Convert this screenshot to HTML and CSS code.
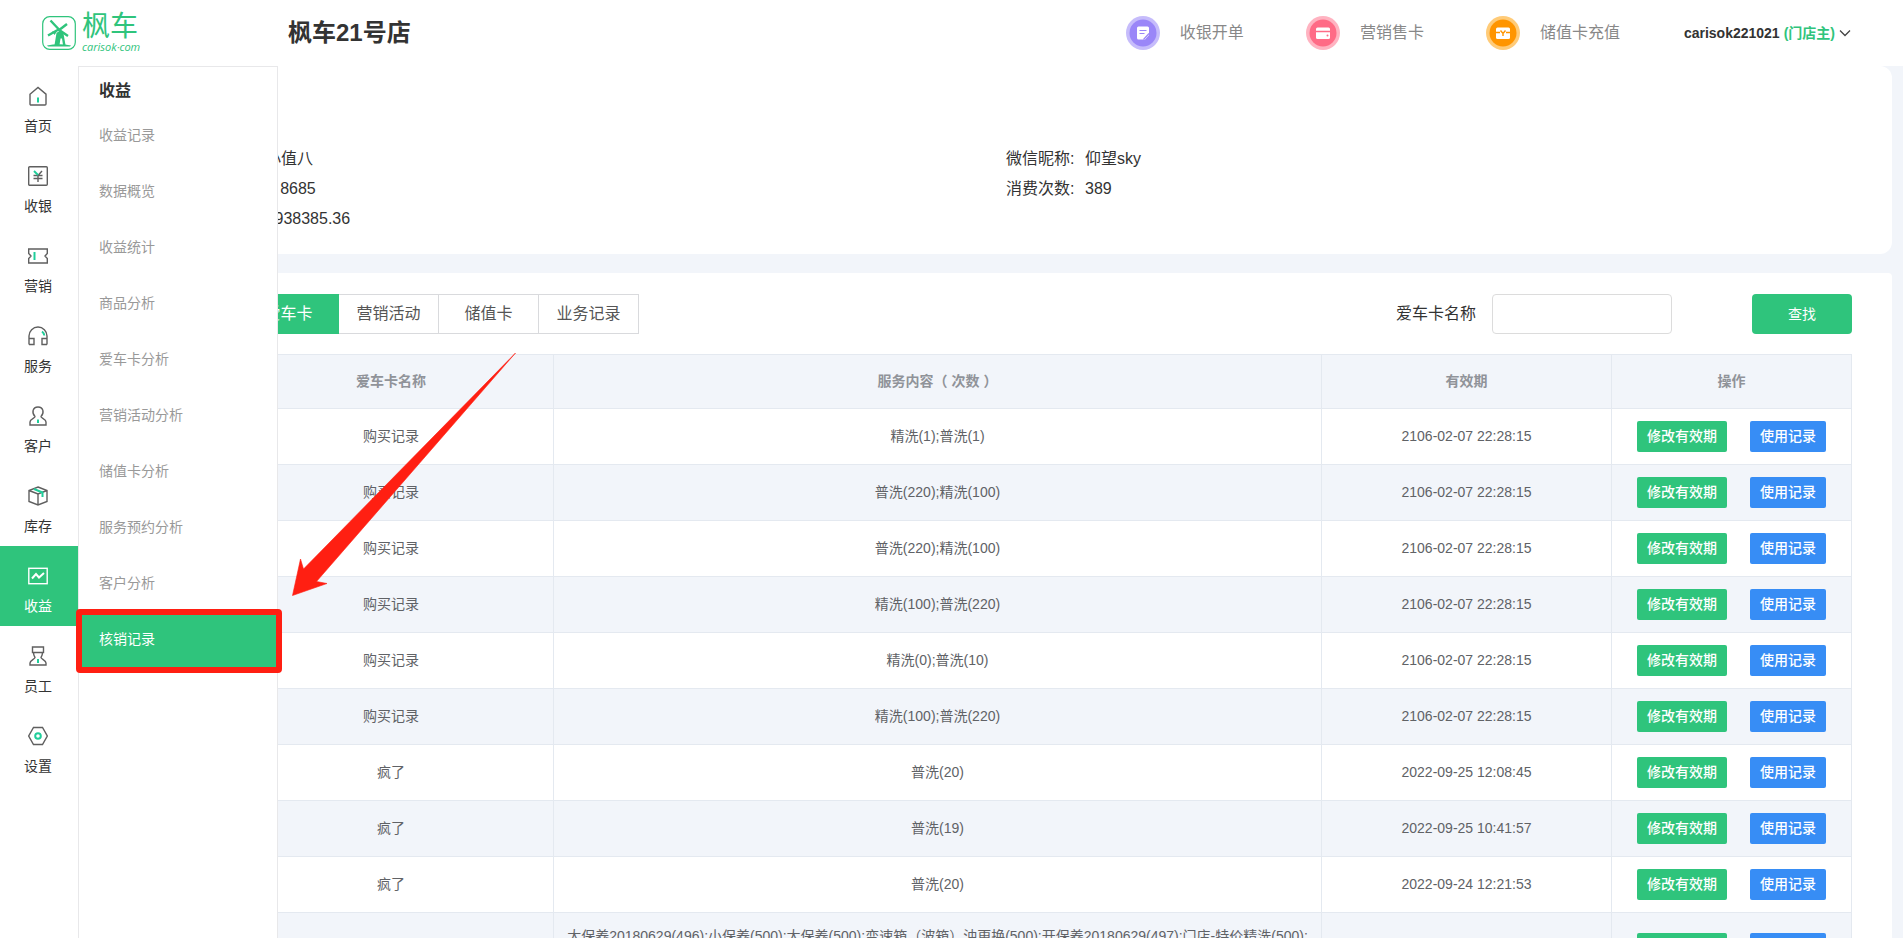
FILE: index.html
```html
<!DOCTYPE html>
<html lang="zh-CN">
<head>
<meta charset="utf-8">
<title>枫车21号店</title>
<link rel="stylesheet" href="styles.css">
</head>
<body>
<header class="topbar">
  <a class="logo" href="#">
    <svg class="logo-mark" viewBox="0 0 34 34" aria-hidden="true">
      <rect x="0.7" y="0.7" width="32.6" height="32.6" rx="7" fill="none" stroke="#2fc47c" stroke-width="1.2"/>
      <path d="M5 29.500Q17 27 29 29.500L28 30.500H6z" fill="#2fc47c"/>
      <path d="M14.500 17 18 14.500 21.500 17.500 23.500 29H21L20 22.500H18.500L17.500 29H12.500z" fill="#2fc47c"/>
      <path d="M8.500 4.500 16.500 13M25 8 16.500 14.500M6 19.500 16.500 13.500M26 20 16.500 13.500" fill="none" stroke="#2fc47c" stroke-width="2.400"/>
      <path d="M10 15.500h5l-2.500 3.500z" fill="#2fc47c"/>
    </svg>
    <span class="logo-text"><span class="logo-name">枫车</span><span class="logo-domain">carisok·com</span></span>
  </a>
  <h1 class="store">枫车21号店</h1>
  <nav class="quick">
    <a class="quick-link" href="#">
      <svg class="quick-icon" viewBox="0 0 34 34" aria-hidden="true"><circle cx="17" cy="17" r="17" fill="#c6bcfb"/><circle cx="17" cy="17" r="13.500" fill="#9a86f8"/><path d="M12.500 10.500h9a1.500 1.500 0 0 1 1.500 1.500v7l-4 4.500h-6.500a1.500 1.500 0 0 1-1.500-1.500V12a1.500 1.500 0 0 1 1.500-1.500z" fill="#fff"/><path d="M13.500 14.500h7M13.500 17.500h5M17.500 23.500l5.500-6" stroke="#9a86f8" stroke-width="1.200"/></svg>
      收银开单</a>
    <a class="quick-link" href="#">
      <svg class="quick-icon" viewBox="0 0 34 34" aria-hidden="true"><circle cx="17" cy="17" r="17" fill="#ffb3c1"/><circle cx="17" cy="17" r="13.500" fill="#ff6b86"/><rect x="10" y="11.500" width="14" height="11.500" rx="1.500" fill="#fff"/><path d="M10 15.500h14" stroke="#ff6b86" stroke-width="1.500"/><circle cx="21.500" cy="19.500" r="1" fill="#ff6b86"/></svg>
      营销售卡</a>
    <a class="quick-link" href="#">
      <svg class="quick-icon" viewBox="0 0 34 34" aria-hidden="true"><circle cx="17" cy="17" r="17" fill="#ffcb78"/><circle cx="17" cy="17" r="13.500" fill="#ff9500"/><rect x="10" y="11.500" width="14" height="11.500" rx="1.500" fill="#fff"/><path d="M10 16.500h4M20 16.500h4M14.500 14.500l2.500 3 2.500-3M17 17v3" fill="none" stroke="#ff9500" stroke-width="1.400"/></svg>
      储值卡充值</a>
  </nav>
  <button class="account" type="button">carisok221021 <span class="role">(门店主)</span>
    <svg class="chevron" viewBox="0 0 12 12" aria-hidden="true"><path d="M1 3.500l5 5 5-5" fill="none" stroke="#444" stroke-width="1.300"/></svg>
  </button>
</header>

<div class="shell">
  <nav class="sidebar">
    <a class="side-link" href="#"><svg class="side-icon" viewBox="0 0 20 20"><path class="ink" d="M2 8.200 10 1.500l8 6.700V18a1 1 0 0 1-1 1H3a1 1 0 0 1-1-1z"/><path class="accent" d="M10 11.500v5"/></svg>首页</a>
    <a class="side-link" href="#"><svg class="side-icon" viewBox="0 0 20 20"><rect class="ink" x="0.700" y="0.700" width="18.600" height="18.600" rx="1"/><path class="ink" d="M14 5l-4 4.500M5.500 9.500h9M5.500 12.500h9M10 9.500V16"/><path class="accent" d="M6 5l4 4"/></svg>收银</a>
    <a class="side-link" href="#"><svg class="side-icon" viewBox="0 0 20 20"><path class="ink" d="M.7 3h18.600v4.500L17 10l2.300 2.500V17H.7v-4.500L3 10 .7 7.500z"/><path class="accent" d="M6.500 6v8"/></svg>营销</a>
    <a class="side-link" href="#"><svg class="side-icon" viewBox="0 0 20 20"><path class="ink" d="M1 18.500V10a9 9 0 0 1 18 0v8.500M1 12.500h5v6H1M19 12.500h-5v6h5"/><path class="accent" d="M14 5.500q2 1.500 2.300 4"/></svg>服务</a>
    <a class="side-link" href="#"><svg class="side-icon" viewBox="0 0 20 20"><path class="ink" d="M7 10.500C3.500 7 4.500 1 10 1s6.500 6 3 9.500c-.5 1.500 5 2.500 5 5.500v3H2v-3c0-3 5.500-4 5-5.500z"/><path class="accent" d="M10 13.500v3.500"/></svg>客户</a>
    <a class="side-link" href="#"><svg class="side-icon" viewBox="0 0 20 20"><path class="ink" d="M10 1l9 3.500v11L10 19l-9-3.500v-11zM1 4.500 10 8l9-3.500M10 8v11"/><path class="accent" d="M6 3l8.500 3.500V11"/></svg>库存</a>
    <a class="side-link current" href="#"><svg class="side-icon" viewBox="0 0 20 20"><rect class="ink" x="0.800" y="2.300" width="18.400" height="15.400"/><path class="ink bold" d="M4 12.500 8 8l3 3.500L16 7"/></svg>收益</a>
    <a class="side-link" href="#"><svg class="side-icon" viewBox="0 0 20 20"><path class="ink" d="M4.500 1h11v5.500h-11zM5.500 6.500c0 2.500.5 3.500 1.500 5 0 1.500-5 2.500-5 5.500v2h16v-2c0-3-5-4-5-5.500 1-1.500 1.500-2.500 1.500-5"/><path class="accent" d="M10 13v4"/></svg>员工</a>
    <a class="side-link" href="#"><svg class="side-icon" viewBox="0 0 20 20"><path class="ink" d="M5.500 1.500h9l4.800 8.500-4.800 8.500h-9L.7 10z"/><circle class="accent" cx="10" cy="10" r="2.800"/></svg>设置</a>
  </nav>

  <nav class="submenu" aria-label="收益">
    <h2 class="submenu-title">收益</h2>
    <a class="sub-link" href="#">收益记录</a>
    <a class="sub-link" href="#">数据概览</a>
    <a class="sub-link" href="#">收益统计</a>
    <a class="sub-link" href="#">商品分析</a>
    <a class="sub-link" href="#">爱车卡分析</a>
    <a class="sub-link" href="#">营销活动分析</a>
    <a class="sub-link" href="#">储值卡分析</a>
    <a class="sub-link" href="#">服务预约分析</a>
    <a class="sub-link" href="#">客户分析</a>
    <a class="sub-link current" href="#">核销记录</a>
  </nav>

  <svg class="pointer" viewBox="0 0 224 243" aria-hidden="true"><path d="M223.500 0 11.500 216 8.500 206 .5 242.500 35 230.500 24.500 228.500z" fill="#ff1f12" stroke="#ff1f12" stroke-width="0.600"/></svg>

  <main class="content">
    <section class="card info">
      <dl class="facts">
        <div class="fact"><dt>客户姓名:</dt><dd>小小值八</dd></div>
        <div class="fact"><dt>手机号码:</dt><dd>138 8685</dd></div>
        <div class="fact"><dt>累计消费:</dt><dd>119938385.36</dd></div>
      </dl>
      <dl class="facts">
        <div class="fact"><dt>微信昵称:</dt><dd>仰望sky</dd></div>
        <div class="fact"><dt>消费次数:</dt><dd>389</dd></div>
      </dl>
    </section>

    <section class="card records">
      <div class="toolbar">
        <div class="tabs" role="tablist">
          <button class="tab" type="button" role="tab">车辆</button>
          <button class="tab current" type="button" role="tab" aria-selected="true">爱车卡</button>
          <button class="tab" type="button" role="tab">营销活动</button>
          <button class="tab" type="button" role="tab">储值卡</button>
          <button class="tab" type="button" role="tab">业务记录</button>
        </div>
        <form class="search">
          <label for="card-name">爱车卡名称</label>
          <input id="card-name" class="search-input" type="text">
          <button class="search-button" type="button">查找</button>
        </form>
      </div>
      <table class="table">
        <colgroup><col class="col-index"><col class="col-name"><col><col class="col-date"><col class="col-actions"></colgroup>
        <thead><tr><th>序号</th><th>爱车卡名称</th><th>服务内容（ 次数 ）</th><th>有效期</th><th>操作</th></tr></thead>
        <tbody>
          <tr><td>1</td><td>购买记录</td><td>精洗(1);普洗(1)</td><td>2106-02-07 22:28:15</td><td><div class="actions"><button class="btn edit" type="button">修改有效期</button><button class="btn usage" type="button">使用记录</button></div></td></tr>
          <tr><td>2</td><td>购买记录</td><td>普洗(220);精洗(100)</td><td>2106-02-07 22:28:15</td><td><div class="actions"><button class="btn edit" type="button">修改有效期</button><button class="btn usage" type="button">使用记录</button></div></td></tr>
          <tr><td>3</td><td>购买记录</td><td>普洗(220);精洗(100)</td><td>2106-02-07 22:28:15</td><td><div class="actions"><button class="btn edit" type="button">修改有效期</button><button class="btn usage" type="button">使用记录</button></div></td></tr>
          <tr><td>4</td><td>购买记录</td><td>精洗(100);普洗(220)</td><td>2106-02-07 22:28:15</td><td><div class="actions"><button class="btn edit" type="button">修改有效期</button><button class="btn usage" type="button">使用记录</button></div></td></tr>
          <tr><td>5</td><td>购买记录</td><td>精洗(0);普洗(10)</td><td>2106-02-07 22:28:15</td><td><div class="actions"><button class="btn edit" type="button">修改有效期</button><button class="btn usage" type="button">使用记录</button></div></td></tr>
          <tr><td>6</td><td>购买记录</td><td>精洗(100);普洗(220)</td><td>2106-02-07 22:28:15</td><td><div class="actions"><button class="btn edit" type="button">修改有效期</button><button class="btn usage" type="button">使用记录</button></div></td></tr>
          <tr><td>7</td><td>疯了</td><td>普洗(20)</td><td>2022-09-25 12:08:45</td><td><div class="actions"><button class="btn edit" type="button">修改有效期</button><button class="btn usage" type="button">使用记录</button></div></td></tr>
          <tr><td>8</td><td>疯了</td><td>普洗(19)</td><td>2022-09-25 10:41:57</td><td><div class="actions"><button class="btn edit" type="button">修改有效期</button><button class="btn usage" type="button">使用记录</button></div></td></tr>
          <tr><td>9</td><td>疯了</td><td>普洗(20)</td><td>2022-09-24 12:21:53</td><td><div class="actions"><button class="btn edit" type="button">修改有效期</button><button class="btn usage" type="button">使用记录</button></div></td></tr>
          <tr><td>10</td><td>疯了</td><td>大保养20180629(496);小保养(500);大保养(500);变速箱（波箱）油更换(500);开保养20180629(497);门店-特价精洗(500);普洗(500)</td><td>2022-09-24 12:21:53</td><td><div class="actions"><button class="btn edit" type="button">修改有效期</button><button class="btn usage" type="button">使用记录</button></div></td></tr>
        </tbody>
      </table>
    </section>
  </main>
</div>
</body>
</html>
```

FILE: styles.css
```css
* { box-sizing: border-box; }

body {
  margin: 0;
  height: 100vh;
  overflow: hidden;
  display: flex;
  flex-direction: column;
  background: #f2f5fa;
  color: #333;
  font: 14px/20px "Liberation Sans", "Noto Sans CJK SC", sans-serif;
}

a { color: inherit; text-decoration: none; }
button, input { font: inherit; color: inherit; }
button { border: 0; padding: 0; background: none; cursor: pointer; }
h1, h2, dl, dd { margin: 0; }

/* Top bar */
.topbar {
  flex: none;
  display: flex;
  align-items: center;
  height: 66px;
  padding: 0 52px 0 42px;
  background: #fff;
}
.logo { display: flex; align-items: center; gap: 6px; width: 246px; color: #2fc47c; }
.logo-mark { width: 34px; height: 34px; }
.logo-text { display: flex; flex-direction: column; }
.logo-name { font-size: 28px; line-height: 28px; }
.logo-domain { font: italic 11px/12px "Open Sans", sans-serif; }
.store { font-size: 24px; line-height: 32px; }
.quick { display: flex; margin-left: auto; }
.quick-link { display: flex; align-items: center; gap: 20px; margin-right: 62px; color: #888; font-size: 16px; }
.quick-link:last-child { margin-right: 64px; }
.quick-icon { width: 34px; height: 34px; }
.account { display: flex; align-items: center; gap: 4px; font-weight: bold; }
.role { color: #2fc47c; }
.chevron { width: 12px; height: 12px; }

/* Navigation */
.shell { position: relative; flex: 1; min-height: 0; display: flex; }
.sidebar { flex: none; width: 78px; background: #fff; }
.side-link {
  display: flex;
  flex-direction: column;
  align-items: center;
  gap: 10px;
  height: 80px;
  padding: 20px 2px 10px 0;
}
.side-icon { width: 20px; height: 20px; }
.ink { fill: none; stroke: #5f5f5f; stroke-width: 1.4; }
.ink.bold { stroke-width: 2; }
.accent { fill: none; stroke: #1fce9a; stroke-width: 2; }
.side-link.current { background: #2fc47c; color: #fff; }
.side-link.current .ink { stroke: #fff; }

.submenu {
  position: absolute;
  z-index: 2;
  top: 0;
  bottom: 0;
  left: 78px;
  width: 200px;
  border: 1px solid #e8e8ea;
  border-bottom: 0;
  background: #fff;
}
.submenu-title { padding: 12px 20px 4px; font-size: 16px; line-height: 24px; font-weight: bold; }
.sub-link { display: block; position: relative; padding: 18px 20px; color: #999; }
.sub-link.current { background: #2fc47c; color: #fff; }
.sub-link.current::after {
  content: "";
  position: absolute;
  inset: -2px -5px -6px -3px;
  border: 6px solid #ff1f12;
  border-radius: 4px;
}
.pointer { position: absolute; z-index: 3; top: 287px; left: 292px; width: 224px; height: 243px; overflow: visible; }

/* Content */
.content {
  flex: 1;
  min-width: 0;
  display: flex;
  flex-direction: column;
  gap: 19px;
  padding: 0 11px 0 10px;
  overflow: auto;
  scrollbar-width: none;
}
.card { flex: none; border-radius: 12px; background: #fff; }
.info {
  display: grid;
  grid-template-columns: 1fr 1fr;
  padding: 78px 50px 20px 82px;
  font-size: 16px;
  line-height: 30px;
}
.fact { display: flex; }
.fact dt { width: 79px; }
.records { padding: 21px 40px; border-radius: 4px; }
.toolbar { display: flex; justify-content: space-between; padding-left: 11px; margin-bottom: 20px; }
.tabs { display: flex; }
.tab {
  width: 100px;
  height: 40px;
  border: 1px solid #d9dadd;
  border-left: 0;
  color: #555;
  font-size: 16px;
}
.tab.current { border-color: #2fc47c; background: #2fc47c; color: #fff; }
.search { display: flex; align-items: center; font-size: 16px; }
.search-input { width: 180px; height: 40px; margin: 0 80px 0 16px; border: 1px solid #dcdcdc; border-radius: 4px; background: #fff; }
.search-button { width: 100px; height: 40px; border-radius: 4px; background: #2fc47c; color: #fff; font-size: 14px; }

.table { width: 100%; table-layout: fixed; border-collapse: collapse; color: #606266; line-height: 23px; text-align: center; }
.col-index { width: 100px; }
.col-name { width: 325px; }
.col-date { width: 290px; }
.col-actions { width: 240px; }
.table th, .table td { padding: 12px; border: 1px solid #e4e9f0; }
.table td { padding-left: 10px; padding-right: 10px; }
.table th { padding: 15px 12px; background: #f2f5fa; color: #909399; line-height: 23px; }
.table tbody tr:nth-child(even) { background: #f2f5fa; }
.actions { display: flex; justify-content: center; gap: 23px; }
.btn { padding: 4px 10px; border-radius: 2px; color: #fff; line-height: 23px; font-weight: 500; }
.edit { background: #2fc47c; }
.usage { background: #378df5; }
```
